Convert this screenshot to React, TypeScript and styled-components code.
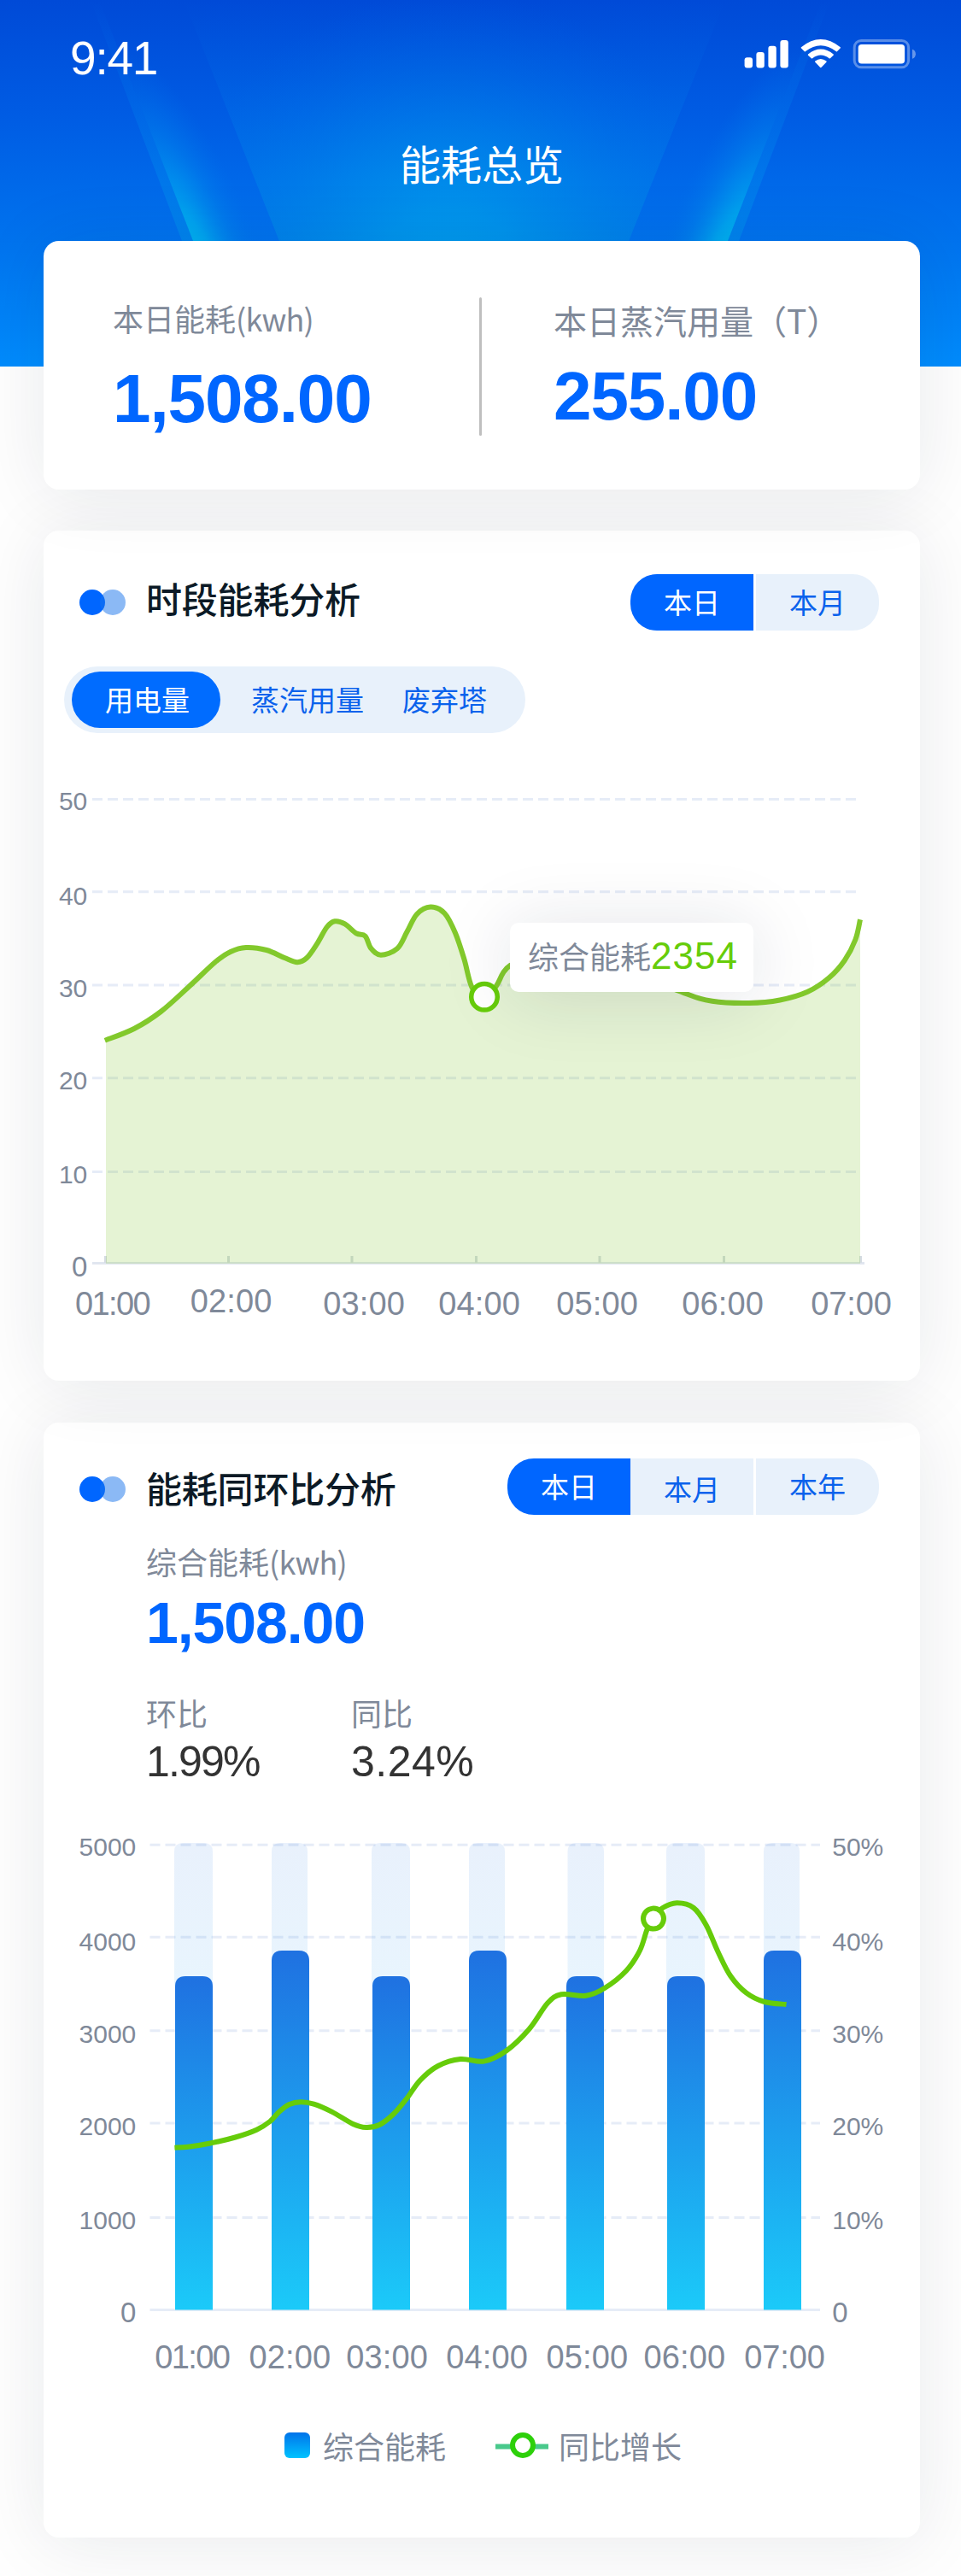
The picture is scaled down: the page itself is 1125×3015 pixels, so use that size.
import React from 'react';
import styled, { createGlobalStyle } from 'styled-components';

const CJK = '"Noto Sans CJK SC", "Noto Sans", sans-serif';
const LATIN = '"Liberation Sans", "Noto Sans CJK SC", sans-serif';
const BLUE = '#0066ff';
const SLATE = '#7f8999';
const GREEN = '#66cc0a';

const GlobalStyle = createGlobalStyle`
  * { box-sizing: border-box; }
  body { margin: 0; background: #fefefe; font-family: ${CJK}; }
`;

const Page = styled.div`
  width: 1125px;
  height: 3015px;
  overflow: hidden;
  background: #fefefe;
`;

const Hero = styled.header`
  position: relative;
  height: 429px;
  overflow: hidden;
  color: #fff;
`;

const Backdrop = styled.svg`
  position: absolute;
  inset: 0;
`;

const StatusBar = styled.div`
  position: relative;
  display: flex;
  justify-content: space-between;
  align-items: flex-start;
  height: 160px;
  padding: 41px 52px 0 82px;
`;

const Time = styled.span`
  font: 400 55px/54px ${LATIN};
  letter-spacing: -1.2px;
`;

const StatusIcons = styled.svg`
  margin-top: 4px;
`;

const PageTitle = styled.h1`
  position: relative;
  margin: 0;
  padding-left: 3px;
  font: 400 48px/60px ${CJK};
  text-align: center;
`;

const Main = styled.main`
  display: flex;
  flex-direction: column;
  margin: -147px 48px 0 51px;
`;

const Card = styled.section<{ $h: number; $z: number; $top?: number; $mt?: number }>`
  position: relative;
  z-index: ${(p) => p.$z};
  height: ${(p) => p.$h}px;
  margin-top: ${(p) => p.$mt ?? 0}px;
  padding-top: ${(p) => p.$top ?? 0}px;
  border-radius: 18px;
  background: #fff;
  box-shadow: 0 5px 84px rgba(22, 32, 60, 0.09);
`;

const SummaryCard = styled(Card)`
  display: grid;
  grid-template-columns: 510px 3px 1fr;
`;

const Divider = styled.div`
  height: 162px;
  margin-top: 66px;
  border-radius: 2px;
  background: #bfbfbf;
`;

const Metric = styled.div<{ $top: number; $left: number; $gap: number }>`
  display: flex;
  flex-direction: column;
  gap: ${(p) => p.$gap}px;
  padding: ${(p) => p.$top}px 0 0 ${(p) => p.$left}px;
`;

const Label = styled.span<{ $size?: number }>`
  font: 400 ${(p) => p.$size ?? 36}px/48px ${CJK};
  color: ${SLATE};
  white-space: nowrap;
`;

const Unit = styled.span`
  letter-spacing: -0.8px;
`;

const Figure = styled.strong<{ $size: number; $line: number }>`
  font: 700 ${(p) => p.$size}px/${(p) => p.$line}px ${LATIN};
  letter-spacing: -1.1px;
  color: ${BLUE};
`;

const CardHeader = styled.div`
  display: flex;
  align-items: center;
  height: 66px;
  padding: 0 48px 0 42px;
`;

const Dots = styled.div<{ $shift?: number }>`
  display: flex;
  margin-top: ${(p) => p.$shift ?? 0}px;
`;

const Dot = styled.i<{ $soft?: boolean }>`
  width: 30px;
  height: 30px;
  margin-left: ${(p) => (p.$soft ? -6 : 0)}px;
  border-radius: 50%;
  background: ${(p) => (p.$soft ? 'rgba(24, 116, 235, 0.5)' : BLUE)};
`;

const CardTitle = styled.h2<{ $shift: number }>`
  margin: ${(p) => p.$shift}px auto 0 24px;
  font: 500 42px/60px ${CJK};
  letter-spacing: -0.2px;
  color: #0c1a26;
`;

const Segments = styled.div`
  display: flex;
  height: 66px;
  border-radius: 31px;
  overflow: hidden;
`;

const Segment = styled.button<{ $active?: boolean; $split?: boolean; $drop?: number }>`
  width: ${(p) => (p.$split ? 147 : 144)}px;
  height: 66px;
  padding: ${(p) => (p.$drop ?? 0) * 2}px 0 3px;
  border: 0 solid #fff;
  border-left-width: ${(p) => (p.$split ? 3 : 0)}px;
  background: ${(p) => (p.$active ? BLUE : '#e8f1fb')};
  background-clip: padding-box;
  color: ${(p) => (p.$active ? '#fff' : '#0a62ec')};
  font: 400 33px/50px ${CJK};
`;

const Pills = styled.div`
  display: flex;
  align-items: center;
  width: 540px;
  height: 78px;
  margin: 42px 0 0 24px;
  padding-left: 9px;
  border-radius: 39px;
  background: #e8f1fb;
`;

const Pill = styled.button<{ $active?: boolean; $left?: number }>`
  width: ${(p) => (p.$active ? '174px' : 'auto')};
  height: 66px;
  margin-left: ${(p) => p.$left ?? 0}px;
  padding: 0 0 3px ${(p) => (p.$active ? 3 : 0)}px;
  border: 0;
  border-radius: 33px;
  background: ${(p) => (p.$active ? '#006cff' : 'transparent')};
  color: ${(p) => (p.$active ? '#fff' : '#0a62ec')};
  font: 400 33px/50px ${CJK};
`;

const ChartBox = styled.div`
  position: relative;
`;

const Chart = styled.svg`
  display: block;
  font-family: ${LATIN};
  fill: ${SLATE};
`;

const Tooltip = styled.div`
  position: absolute;
  left: 546px;
  top: 222px;
  width: 285px;
  height: 81px;
  padding: 8px 0 0 21px;
  border-radius: 10px;
  background: #fff;
  box-shadow: 0 6px 84px rgba(22, 32, 60, 0.13);
  font: 400 36px/60px ${CJK};
  color: ${SLATE};
  white-space: nowrap;
`;

const TooltipValue = styled.span`
  font: 400 44px/60px ${LATIN};
  letter-spacing: 1px;
  color: ${GREEN};
`;

const Stats = styled.div`
  display: flex;
  flex-direction: column;
  height: 327px;
  padding: 30px 0 0 120px;
`;

const Total = styled.div`
  display: flex;
  flex-direction: column;
  gap: 13px;
`;

const Ratios = styled.div`
  display: grid;
  grid-template-columns: 240px 240px;
  margin-top: 46px;
`;

const Ratio = styled.div`
  display: flex;
  flex-direction: column;
  gap: 4px;
`;

const RatioValue = styled.span<{ $track: number }>`
  font: 400 50px/60px ${LATIN};
  letter-spacing: ${(p) => p.$track}px;
  color: #333;
`;

const Legend = styled.div`
  display: flex;
  align-items: center;
  height: 48px;
  margin-top: 18px;
  padding-left: 282px;
`;

const Swatch = styled.i`
  width: 30px;
  height: 30px;
  margin-right: 15px;
  border-radius: 6px;
  background: linear-gradient(#0073ea, #00c3ff);
`;

const LegendMark = styled.svg`
  margin: 0 12px 0 58px;
`;

type Pt = [number, number];

/* Catmull-Rom spline through the samples, expressed as cubic segments. */
function spline(pts: Pt[]): string {
  let d = `M${pts[0][0]} ${pts[0][1]}`;
  for (let i = 0; i < pts.length - 1; i++) {
    const a = pts[i - 1] ?? pts[i];
    const b = pts[i];
    const c = pts[i + 1];
    const e = pts[i + 2] ?? c;
    d += ` C${b[0] + (c[0] - a[0]) / 6} ${b[1] + (c[1] - a[1]) / 6} ${c[0] - (e[0] - b[0]) / 6} ${c[1] - (e[1] - b[1]) / 6} ${c[0]} ${c[1]}`;
  }
  return d;
}

const usage: Pt[] = [
  [122.8, 1217.8], [157, 1204], [188.3, 1184], [222, 1154], [252, 1126], [269.8, 1114], [288, 1109],
  [312, 1112], [333, 1121], [348, 1126.2], [359, 1121.3], [371, 1104.8], [382.7, 1085], [392, 1078.3],
  [403.7, 1081.4], [417, 1092.4], [427.5, 1095.6], [434.4, 1110], [445.8, 1117.7], [465, 1110.3],
  [476.5, 1090.6], [488, 1070], [504, 1061.6], [520.5, 1069], [533, 1092], [543.4, 1122.7],
  [552.2, 1154.9], [566, 1172], [581, 1154], [597.8, 1129.6], [650, 1108], [720, 1130], [799.6, 1161.7],
  [833.8, 1171.8], [877, 1174], [913, 1170.5], [945.5, 1160.8], [970.7, 1144.3], [988.8, 1124],
  [1001.4, 1099.8], [1007, 1076.3],
];

const growth: Pt[] = [
  [204.4, 2513.7], [220, 2512.8], [245, 2508.8], [275.5, 2501.5], [300.4, 2492.7], [316, 2483],
  [327, 2471.5], [338.7, 2463], [352, 2460.2], [367.4, 2462.6], [388.4, 2471.6], [413.3, 2486],
  [428.6, 2490], [444, 2487], [461, 2474], [476.5, 2455.7], [491.8, 2434.8], [512.8, 2418],
  [539, 2410], [566.4, 2412.6], [592.4, 2400.5], [619.4, 2375], [641, 2344.5], [657, 2334.3],
  [686, 2335.8], [707.7, 2327], [733, 2306.7], [749, 2283], [757.4, 2258.7], [765, 2244],
  [775, 2233.5], [792.4, 2227.3], [812, 2233], [826.6, 2253], [841, 2285.5], [855.4, 2313],
  [873.5, 2332.3], [895, 2343], [920.5, 2346],
];

/* text, ink left edge, ink width, baseline */
type Tick = [string, number, number, number];

const usageHours: Tick[] = [
  ['01:00', 88.8, 86, 1539], ['02:00', 223.5, 93, 1536], ['03:00', 379, 93, 1539], ['04:00', 514, 93, 1539],
  ['05:00', 652, 93, 1539], ['06:00', 799, 93, 1539], ['07:00', 950, 92, 1539],
];

const growthHours: Tick[] = [
  ['01:00', 182, 86, 2772], ['02:00', 292.4, 93, 2772], ['03:00', 406, 93, 2772], ['04:00', 523, 93, 2772],
  ['05:00', 640.3, 93, 2772], ['06:00', 754.3, 93, 2772], ['07:00', 872, 92, 2772],
];

const usageRows: [string, number, number][] = [
  ['50', 935.5, 947.5], ['40', 1043.7, 1059], ['30', 1153, 1166.7], ['20', 1261.8, 1275], ['10', 1371.6, 1385],
];

const growthRows: [string, string, number, number][] = [
  ['5000', '50%', 2159.3, 2171.7], ['4000', '40%', 2267.3, 2283.2], ['3000', '30%', 2376.7, 2391],
  ['2000', '20%', 2485, 2499], ['1000', '10%', 2595.4, 2608.7],
];

/* track x, track width, bar x, bar width, bar top */
const bars: [number, number, number, number, number][] = [
  [204, 45, 205, 44, 2313], [318, 42, 318, 44, 2283], [435, 45, 436, 44, 2313], [549, 42, 549, 44, 2283],
  [664.5, 42.5, 663, 44, 2313], [780, 45, 781, 44, 2313], [894, 42, 894, 44, 2283],
];

const capped = (x: number, w: number, top: number, bottom: number, r: number) =>
  `M${x} ${bottom}V${top + r}Q${x} ${top} ${x + r} ${top}H${x + w - r}Q${x + w} ${top} ${x + w} ${top + r}V${bottom}Z`;

const Hours = ({ items }: { items: Tick[] }) => (
  <g fontSize="38">
    {items.map(([text, x, w, y]) => (
      <text key={text} x={x - 0.8} y={y} textLength={w + 2.6}>{text}</text>
    ))}
  </g>
);

function HeroBackdrop() {
  return (
    <Backdrop width="1125" height="429" viewBox="0 0 1125 429">
      <defs>
        <linearGradient id="sky" x1="0" y1="0" x2="0" y2="1">
          <stop offset="0" stopColor="#004ad7" />
          <stop offset="0.3" stopColor="#005be3" />
          <stop offset="0.66" stopColor="#0073ee" />
          <stop offset="1" stopColor="#008cfd" />
        </linearGradient>
        <linearGradient id="cone" gradientUnits="userSpaceOnUse" x1="0" y1="0" x2="0" y2="282">
          <stop offset="0" stopColor="#0060e0" stopOpacity="0" />
          <stop offset="0.5" stopColor="#0074e8" stopOpacity="0.4" />
          <stop offset="1" stopColor="#0086ea" stopOpacity="0.75" />
        </linearGradient>
        <radialGradient id="glow" gradientUnits="userSpaceOnUse" cx="525" cy="330" r="340">
          <stop offset="0" stopColor="#009cec" />
          <stop offset="0.25" stopColor="#0096ec" stopOpacity="0.85" />
          <stop offset="0.5" stopColor="#008aea" stopOpacity="0.55" />
          <stop offset="0.75" stopColor="#007ae8" stopOpacity="0.25" />
          <stop offset="1" stopColor="#0068e4" stopOpacity="0" />
        </radialGradient>
        <radialGradient id="beam" gradientUnits="userSpaceOnUse" cx="0" cy="0" r="1" gradientTransform="translate(238 330) rotate(-21.3) scale(80 290)">
          <stop offset="0" stopColor="#00c0f0" />
          <stop offset="0.3" stopColor="#00a8ef" stopOpacity="0.9" />
          <stop offset="0.65" stopColor="#0086ec" stopOpacity="0.45" />
          <stop offset="1" stopColor="#0070ea" stopOpacity="0" />
        </radialGradient>
        <linearGradient id="edge" x1="0" y1="0" x2="0" y2="1">
          <stop offset="0" stopColor="#0070ea" stopOpacity="0" />
          <stop offset="1" stopColor="#0088ec" stopOpacity="0.75" />
        </linearGradient>
      </defs>
      <rect width="1125" height="429" fill="url(#sky)" />
      <path d="M215 0H849L736 282H327Z" fill="url(#cone)" />
      <path d="M215 0H849L736 282H327Z" fill="url(#glow)" />
      {['', 'translate(1078 0) scale(-1 1)'].map((transform) => (
        <g key={transform} transform={transform}>
          <path d="M106 0H116L226 282H213Z" fill="url(#edge)" />
          <path d="M116 0H215L329 282H226Z" fill="url(#beam)" />
        </g>
      ))}
    </Backdrop>
  );
}

function SystemIcons() {
  return (
    <StatusIcons width="202" height="36" viewBox="871 45 202 36" fill="#fff">
      <rect x="871.6" y="67.3" width="9.4" height="12.3" rx="3" />
      <rect x="885.4" y="61" width="9.4" height="18.6" rx="3" />
      <rect x="899.4" y="53.8" width="9.4" height="25.8" rx="3" />
      <rect x="913.4" y="47" width="9.4" height="32.6" rx="3" />
      <path d="M937.9 55.3Q960.8 36.8 983.8 55.3Q984.2 56 983.6 56.6L979.9 60.2Q979.2 60.6 978.6 60.1Q960.8 46.6 943.1 60.1Q942.4 60.6 941.8 60.2L938 56.6Q937.4 56 937.9 55.3Z" />
      <path d="M946 63.4Q960.8 51.7 975.7 63.4Q976.2 64.1 975.6 64.7L971.9 68.3Q971.2 68.8 970.6 68.3Q960.8 60.8 951.1 68.3Q950.4 68.8 949.8 68.3L946 64.7Q945.5 64.1 946 63.4Z" />
      <path d="M954.2 71.4Q960.8 66.4 967.5 71.4Q968 72.2 967.4 72.8L961.6 78.8Q960.8 79.6 960 78.8L954.3 72.8Q953.7 72.2 954.2 71.4Z" />
      <rect x="1000.2" y="47.4" width="63.4" height="31.4" rx="8" fill="none" stroke="#fff" strokeOpacity="0.35" strokeWidth="3" />
      <rect x="1004.7" y="52" width="54.4" height="22.4" rx="4" />
      <path d="M1068 57.8Q1071.9 59.2 1071.9 63.2Q1071.9 67.2 1068 68.8Z" fillOpacity="0.4" />
    </StatusIcons>
  );
}

function UsageChart() {
  const line = spline(usage);
  return (
    <Chart width="1026" height="758" viewBox="51 858 1026 758">
      <g stroke="#e6ecf7" strokeWidth="3" strokeDasharray="12 6">
        {usageRows.map(([t, y]) => <path key={t} d={`M108 ${y}H1002`} />)}
      </g>
      <path d="M108 1478.5H1012" stroke="#e1e6f0" strokeWidth="3" />
      <path d="M123.5 1470V1478M267.5 1470V1478M412 1470V1478M557.5 1470V1478M702 1470V1478M847.5 1470V1478M1007.5 1470V1478" stroke="#d5dce2" strokeWidth="3" />
      <path d={`${line}V1479H124V1217.8Z`} fill="#7fc526" fillOpacity="0.2" />
      <path d={line} fill="none" stroke="#82c92c" strokeWidth="6" />
      <circle cx="567" cy="1166.8" r="15.3" fill="#fff" stroke={GREEN} strokeWidth="5.5" />
      <g fontSize="30" textAnchor="end">
        {usageRows.map(([t, , y]) => <text key={t} x="102.3" y={y}>{t}</text>)}
        <text x="102.3" y="1493.6" fontSize="33">0</text>
      </g>
      <Hours items={usageHours} />
    </Chart>
  );
}

function GrowthChart() {
  return (
    <Chart width="1026" height="720" viewBox="51 2100 1026 720">
      <defs>
        <linearGradient id="bar" x1="0" y1="0" x2="0" y2="1">
          <stop offset="0" stopColor="#1f71e1" />
          <stop offset="1" stopColor="#1bcaf9" />
        </linearGradient>
        <linearGradient id="track" gradientUnits="userSpaceOnUse" x1="0" y1="2157" x2="0" y2="2330">
          <stop offset="0" stopColor="#1f71e1" stopOpacity="0.1" />
          <stop offset="1" stopColor="#1b9af2" stopOpacity="0.1" />
        </linearGradient>
      </defs>
      <g stroke="#e6ecf7" strokeWidth="3" strokeDasharray="12 6">
        {growthRows.map(([t, , y]) => <path key={t} d={`M175.5 ${y}H960`} />)}
      </g>
      <path d="M175.5 2703.5H960" stroke="#e6ecf7" strokeWidth="3" />
      {bars.map(([tx, tw, x, w, top]) => (
        <g key={x}>
          <path d={capped(tx, tw, 2157, top + 12, 10)} fill="url(#track)" />
          <path d={capped(x, w, top, 2703.5, 12)} fill="url(#bar)" />
        </g>
      ))}
      <path d={spline(growth)} fill="none" stroke={GREEN} strokeWidth="6" />
      <circle cx="765" cy="2245.6" r="12" fill="#fff" stroke={GREEN} strokeWidth="6" />
      <g fontSize="30">
        {growthRows.map(([left, right, , y]) => (
          <g key={left}>
            <text x="159.3" y={y} textAnchor="end">{left}</text>
            <text x="974.3" y={y} textLength="60">{right}</text>
          </g>
        ))}
      </g>
      <g fontSize="33">
        <text x="159.3" y="2717.5" textAnchor="end">0</text>
        <text x="974.3" y="2717.5">0</text>
      </g>
      <Hours items={growthHours} />
    </Chart>
  );
}

export default function App() {
  return (
    <Page>
      <GlobalStyle />
      <Hero>
        <HeroBackdrop />
        <StatusBar>
          <Time>9:41</Time>
          <SystemIcons />
        </StatusBar>
        <PageTitle>能耗总览</PageTitle>
      </Hero>
      <Main>
        <SummaryCard $h={291} $z={3}>
          <Metric $top={66} $left={81} $gap={31}>
            <Label>本日能耗<Unit>(kwh)</Unit></Label>
            <Figure $size={80} $line={80}>1,508.00</Figure>
          </Metric>
          <Divider />
          <Metric $top={68} $left={84} $gap={26}>
            <Label $size={39}>本日蒸汽用量（T）</Label>
            <Figure $size={80} $line={80}>255.00</Figure>
          </Metric>
        </SummaryCard>

        <Card $h={995} $z={2} $top={51} $mt={48}>
          <CardHeader>
            <Dots><Dot /><Dot $soft /></Dots>
            <CardTitle $shift={-10}>时段能耗分析</CardTitle>
            <Segments>
              <Segment $active>本日</Segment>
              <Segment $split>本月</Segment>
            </Segments>
          </CardHeader>
          <Pills>
            <Pill $active>用电量</Pill>
            <Pill $left={36}>蒸汽用量</Pill>
            <Pill $left={45}>废弃塔</Pill>
          </Pills>
          <ChartBox>
            <UsageChart />
            <Tooltip>综合能耗<TooltipValue>2354</TooltipValue></Tooltip>
          </ChartBox>
        </Card>

        <Card $h={1305} $z={1} $top={42} $mt={49}>
          <CardHeader>
            <Dots $shift={6}><Dot /><Dot $soft /></Dots>
            <CardTitle $shift={1}>能耗同环比分析</CardTitle>
            <Segments>
              <Segment $active>本日</Segment>
              <Segment $drop={3}>本月</Segment>
              <Segment $split>本年</Segment>
            </Segments>
          </CardHeader>
          <Stats>
            <Total>
              <Label>综合能耗<Unit>(kwh)</Unit></Label>
              <Figure $size={68} $line={70}>1,508.00</Figure>
            </Total>
            <Ratios>
              <Ratio>
                <Label>环比</Label>
                <RatioValue $track={-1.8}>1.99%</RatioValue>
              </Ratio>
              <Ratio>
                <Label>同比</Label>
                <RatioValue $track={0.5}>3.24%</RatioValue>
              </Ratio>
            </Ratios>
          </Stats>
          <GrowthChart />
          <Legend>
            <Swatch />
            <Label>综合能耗</Label>
            <LegendMark width="62" height="30" viewBox="0 0 62 30">
              <path d="M0 16.5H62" stroke="#49c98b" strokeWidth="6" />
              <circle cx="32" cy="15" r="12" fill="#fff" stroke="#2dd00a" strokeWidth="6" />
            </LegendMark>
            <Label>同比增长</Label>
          </Legend>
        </Card>
      </Main>
    </Page>
  );
}
